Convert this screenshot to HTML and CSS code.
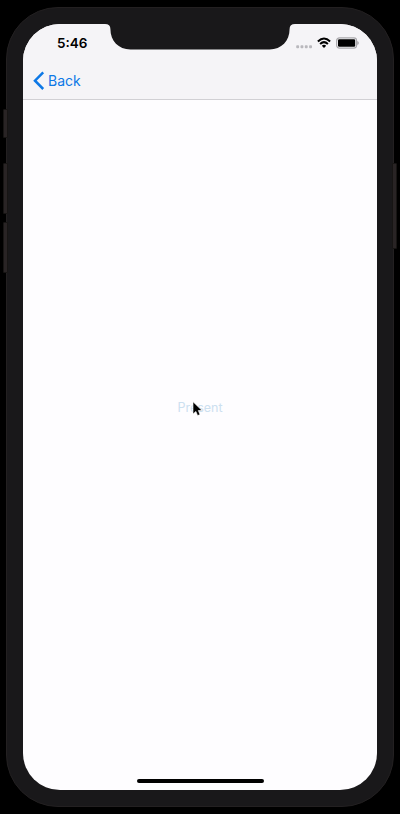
FILE: index.html
```html
<!DOCTYPE html>
<html lang="en">
<head>
<meta charset="utf-8">
<title>Present</title>
<link rel="stylesheet" href="styles.css">
</head>
<body>
<div class="phone">
  <i class="button mute"></i>
  <i class="button volume-up"></i>
  <i class="button volume-down"></i>
  <i class="button power"></i>
  <div class="screen">
    <header class="header">
      <div class="status">
        <span class="time">5:46</span>
        <div class="indicators">
          <svg class="signal" width="17" height="4" viewBox="0 0 17 4"><g fill="#b9b8bd"><rect x=".2" y=".2" width="2.9" height="3" rx=".9"/><rect x="4.5" y=".2" width="2.9" height="3" rx=".9"/><rect x="8.8" y=".2" width="2.9" height="3" rx=".9"/><rect x="13.1" y=".2" width="2.9" height="3" rx=".9"/></g></svg>
          <svg class="wifi" width="14" height="11" viewBox="0 0 14 11"><path d="M.9 4.5Q7-1.5 13.1 4.5M3.1 7Q7 3.3 10.9 7" fill="none" stroke="#000" stroke-width="2"/><path d="M4.8 8.8Q7 6.8 9.2 8.8L7 11Z"/></svg>
          <svg class="battery" width="23" height="12" viewBox="0 0 23 12"><rect x=".6" y=".9" width="20" height="10.2" rx="2.8" fill="#f5f4f7" stroke="#aaa9ad" stroke-width="1.2"/><rect x="2" y="2.3" width="17.2" height="7.4" rx="1.3"/><path d="M21.2 4q1.7.5 1.7 2t-1.7 2z" fill="#aaa9ad"/></svg>
        </div>
      </div>
      <nav class="nav">
        <svg width="12" height="20" viewBox="0 0 12 20"><path d="M10.2 1.4L2 9.7l8.2 8.3" fill="none" stroke="#0d78e6" stroke-width="2.5"/></svg>
        <span class="back">Back</span>
      </nav>
    </header>
    <main class="content"><span class="present">Present</span></main>
    <div class="home"></div>
    <svg class="notch" width="190" height="26" viewBox="0 0 190 26"><path d="M0 0Q5.4 0 5.4 5C5.4 17 13.5 25.4 25.5 25.4H164.5C176.5 25.4 184.6 17 184.6 5Q184.6 0 190 0Z" fill="#19181a"/></svg>
    <svg class="cursor" width="11" height="16" viewBox="0 0 11 16"><path d="M1 .8V13L3.9 10.4L5.6 14.6L8 13.6L6.3 9.5H10Z" stroke="#fff" stroke-width=".6"/></svg>
  </div>
</div>
</body>
</html>
```
FILE: styles.css
```css
* { box-sizing: border-box; }
body {
  margin: 0;
  height: 814px;
  padding: 7px 6px;
  background: #000;
  font-family: Inter, "Liberation Sans", sans-serif;
  overflow: hidden;
}
.phone {
  position: relative;
  width: 388px;
  height: 800px;
  padding: 16px;
  border: 1px solid #232021;
  border-radius: 52px;
  background: #19181a;
}
.screen {
  position: relative;
  display: flex;
  flex-direction: column;
  width: 354px;
  height: 766px;
  border-radius: 37px;
  overflow: hidden;
  background: #fefdff;
}
.header {
  height: 76px;
  background: #f5f4f7;
  border-bottom: 1px solid #d1d0d4;
}
.status {
  display: flex;
  justify-content: space-between;
  height: 39px;
  padding: 0 18px 0 34px;
}
.time {
  padding-top: 11px;
  font-size: 13.5px;
  line-height: 17px;
  font-weight: 600;
}
.indicators { display: flex; }
.signal { margin-top: 21px; }
.wifi { margin: 13px 0 0 4px; }
.battery { margin: 13px 0 0 5px; }
.nav {
  display: flex;
  align-items: center;
  height: 35px;
  padding-left: 10px;
  gap: 3px;
  color: #0d78e6;
}
.back {
  font-size: 14px;
  line-height: 20px;
}
.content {
  flex: 1;
  display: flex;
  justify-content: center;
  padding-top: 300px;
}
.present {
  font-size: 12.5px;
  line-height: 16px;
  color: #cce0f0;
}
.home {
  align-self: center;
  width: 127px;
  height: 4px;
  margin-bottom: 7px;
  border-radius: 2px;
  background: #000;
}
.notch {
  position: absolute;
  top: 0;
  left: 82px;
}
.cursor {
  position: absolute;
  left: 169px;
  top: 377px;
}
.button {
  position: absolute;
  left: -4px;
  width: 5px;
  border: 1px solid #171514;
  border-radius: 1px;
  background: #292425;
}
.mute { top: 101px; height: 29px; }
.volume-up { top: 155px; height: 51px; }
.volume-down { top: 214px; height: 51px; }
.power { left: auto; right: -4px; top: 155px; height: 86px; }
```
